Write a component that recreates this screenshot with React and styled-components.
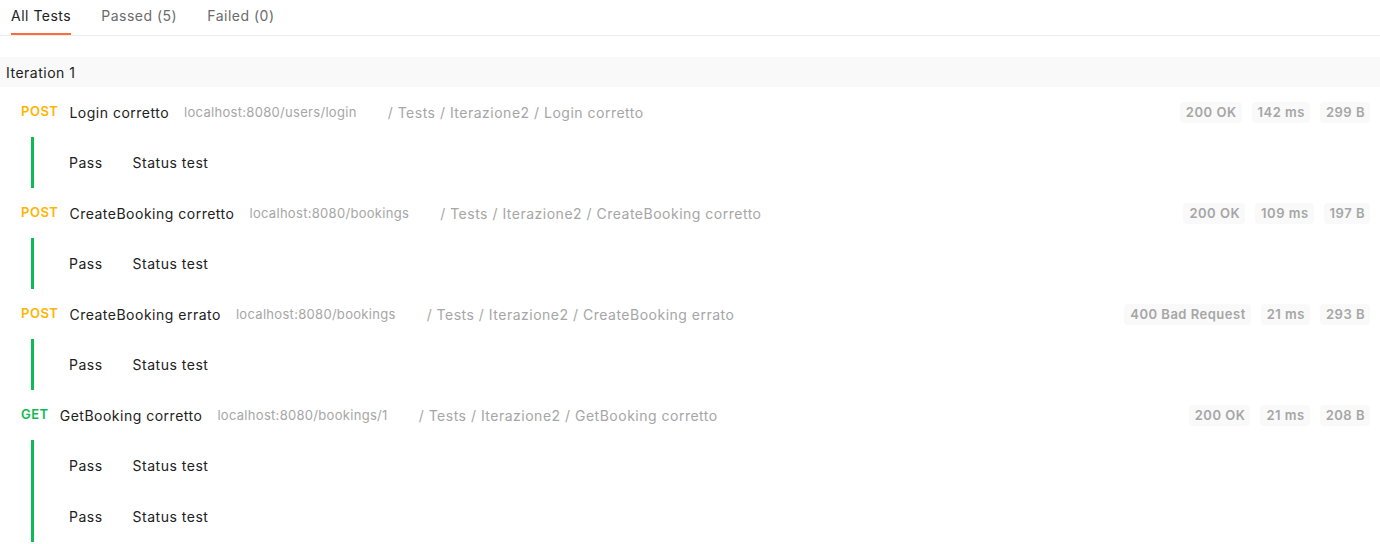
import styled, { createGlobalStyle } from "styled-components";

const GlobalStyle = createGlobalStyle`
body {
  margin:0;
  font-family:Inter, "Noto Sans", sans-serif;
  background:#fff;
  color:#212121;
  letter-spacing:0.5px;
}
`
const Page = styled.div`
display:flex;
flex-direction:column;
width:1380px;
`
const TabBar = styled.div`
display:flex;
gap:30px;
padding-left:11px;
border-bottom:1px solid #ededed;
`
const Tab = styled.div`
display:flex;
align-items:center;
font-size:14px;
color:${props => props.active ? "#212121" : "#6b6b6b"};
border-bottom:2px solid ${props => props.active ? "#ff6c37" : "transparent"};
box-sizing:border-box;
height:35px;
padding-bottom:2px;
`
const IterationHeader = styled.div`
margin-top:21px;
height:30px;
display:flex;
align-items:center;
padding-left:6px;
background:#f9f9f9;
font-size:14px;
`
const RequestRow = styled.div`
height:50px;
display:flex;
align-items:center;
padding:0 10px 0 21px;
font-size:14px;
`
const Method = styled.span`
font-size:13px;
font-weight:600;
color:${props => props.color};
margin-right:11px;
position:relative;
top:-1px;
`
const Name = styled.span`
color:#212121;
margin-right:15px;
`
const Url = styled.span`
font-size:13px;
letter-spacing:0.3px;
color:#a6a6a6;
margin-right:31px;
`
const Path = styled.span`
color:#a6a6a6;
flex:1;
`
const Chips = styled.div`
display:flex;
gap:10px;
`
const Chip = styled.span`
height:21px;
display:flex;
align-items:center;
padding:0 5px 0 6px;
border-radius:4px;
background:#f9f9f9;
color:#a6a6a6;
font-size:13px;
font-weight:600;
letter-spacing:0.5px;
`
const ResultGroup = styled.div`
margin-left:31px;
border-left:3px solid #0cbb52;
`
const PassRow = styled.div`
height:51px;
display:flex;
align-items:center;
gap:30px;
padding-left:35px;
font-size:14px;
color:#212121;
`

const requests = [
   { method: "POST", name: "Login corretto", url: "localhost:8080/users/login", status: "200 OK", time: "142 ms", size: "299 B", tests: 1 },
   { method: "POST", name: "CreateBooking corretto", url: "localhost:8080/bookings", status: "200 OK", time: "109 ms", size: "197 B", tests: 1 },
   { method: "POST", name: "CreateBooking errato", url: "localhost:8080/bookings", status: "400 Bad Request", time: "21 ms", size: "293 B", tests: 1 },
   { method: "GET", name: "GetBooking corretto", url: "localhost:8080/bookings/1", status: "200 OK", time: "21 ms", size: "208 B", tests: 2 },
]

const methodColors = { POST: "#ffb400", GET: "#0cbb52" }

export default function App() {
   return (
      <Page>
         <GlobalStyle />
         <TabBar>
            <Tab active>All Tests</Tab>
            <Tab>Passed (5)</Tab>
            <Tab>Failed (0)</Tab>
         </TabBar>
         <IterationHeader>Iteration 1</IterationHeader>
         {requests.map((r, i) => (
            <div key={i}>
               <RequestRow>
                  <Method color={methodColors[r.method]}>{r.method}</Method>
                  <Name>{r.name}</Name>
                  <Url>{r.url}</Url>
                  <Path>/ Tests / Iterazione2 / {r.name}</Path>
                  <Chips>
                     <Chip>{r.status}</Chip>
                     <Chip>{r.time}</Chip>
                     <Chip>{r.size}</Chip>
                  </Chips>
               </RequestRow>
               <ResultGroup>
                  {Array.from({ length: r.tests }).map((_, j) => (
                     <PassRow key={j}>
                        <span>Pass</span>
                        <span>Status test</span>
                     </PassRow>
                  ))}
               </ResultGroup>
            </div>
         ))}
      </Page>
   )
}
